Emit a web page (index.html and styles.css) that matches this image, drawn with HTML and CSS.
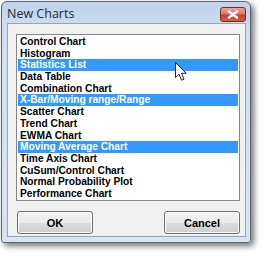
FILE: index.html
```html
<!DOCTYPE html>
<html>
<head>
<meta charset="utf-8">
<link rel="stylesheet" href="styles.css">
</head>
<body>
<div class="window">
  <div class="titlebar">
    <span class="title">New Charts</span>
    <span class="close"><svg width="12" height="9" viewBox="0 0 12 9"><path d="M2 1.5 L10 7.5 M10 1.5 L2 7.5" stroke="#ffffff" stroke-width="2.4" stroke-linecap="round"/></svg></span>
  </div>
  <div class="content">
    <ul class="listbox">
      <li>Control Chart</li>
      <li>Histogram</li>
      <li class="sel">Statistics List</li>
      <li>Data Table</li>
      <li>Combination Chart</li>
      <li class="sel">X-Bar/Moving range/Range</li>
      <li>Scatter Chart</li>
      <li>Trend Chart</li>
      <li>EWMA Chart</li>
      <li class="sel">Moving Average Chart</li>
      <li>Time Axis Chart</li>
      <li>CuSum/Control Chart</li>
      <li>Normal Probability Plot</li>
      <li>Performance Chart</li>
    </ul>
    <div class="buttons">
      <button class="btn">OK</button>
      <button class="btn">Cancel</button>
    </div>
  </div>
</div>
<svg class="cursor" width="14" height="20" viewBox="0 0 14 20"><path d="M0.5 0.5 L0.5 15.5 L4 12.2 L6.6 18.2 L9 17.2 L6.5 11.3 L11.2 11.3 Z" fill="#ffffff" stroke="#222" stroke-width="1" stroke-linejoin="round"/></svg>
</body>
</html>
```
FILE: styles.css
```css
html, body {
  margin: 0;
  padding: 0;
  background: #ffffff;
}
body {
  position: relative;
  width: 267px;
  height: 259px;
  overflow: hidden;
}
.window {
  margin: 1px 0 0 1px;
  width: 250px;
  height: 242px;
  box-sizing: border-box;
  border: 1px solid #5a6878;
  border-radius: 6px 6px 3px 3px;
  background: linear-gradient(#bfd2e8, #d0dfee 30px, #d8e4f0);
  box-shadow: 3px 3px 6px rgba(0,0,0,0.55);
  padding: 0 4px 5px 5px;
  display: flex;
  flex-direction: column;
}
.titlebar {
  height: 21px;
  display: flex;
  align-items: center;
  justify-content: space-between;
}
.title {
  font-family: "Open Sans", "Noto Sans", sans-serif;
  font-size: 12.5px;
  color: #1c2a3a;
  padding-left: 0;
  margin-top: 1px;
}
.close {
  width: 26px;
  height: 15px;
  box-sizing: border-box;
  margin-right: 0;
  margin-top: 3px;
  border: 1px solid #7a2a22;
  border-radius: 3px;
  background: linear-gradient(#e9a89d, #d8776a 45%, #c4412f 55%, #d0604c);
  display: flex;
  align-items: center;
  justify-content: center;
}
.content {
  flex: 1;
  background: #f0f0f0;
  border: 1px solid #94a6bb;
  padding: 10px 5px 0 8px;
  display: flex;
  flex-direction: column;
}
.listbox {
  list-style: none;
  margin: 0;
  padding: 1px;
  width: 224px;
  height: 167px;
  box-sizing: border-box;
  background: #ffffff;
  border: 1px solid #828790;
  font-family: "Liberation Sans", Arial, sans-serif;
  font-weight: bold;
  font-size: 10.2px;
  color: #000000;
}
.listbox li {
  height: 11.7px;
  line-height: 11.7px;
  padding-left: 2px;
  white-space: nowrap;
}
.listbox li.sel {
  background: #3399ff;
  color: #ffffff;
}
.buttons {
  display: flex;
  justify-content: space-between;
  width: 223px;
  margin-left: 1px;
  margin-top: 10px;
}
.btn {
  width: 76px;
  height: 23px;
  border: 1px solid #707070;
  border-radius: 3px;
  background: linear-gradient(#f2f2f2, #ebebeb 50%, #dddddd 50%, #cfcfcf);
  box-shadow: inset 0 0 0 1px #fcfcfc;
  font-family: "Liberation Sans", Arial, sans-serif;
  font-weight: bold;
  font-size: 11px;
  color: #000000;
  padding: 0;
}
.cursor {
  position: absolute;
  left: 175px;
  top: 62px;
}
```
